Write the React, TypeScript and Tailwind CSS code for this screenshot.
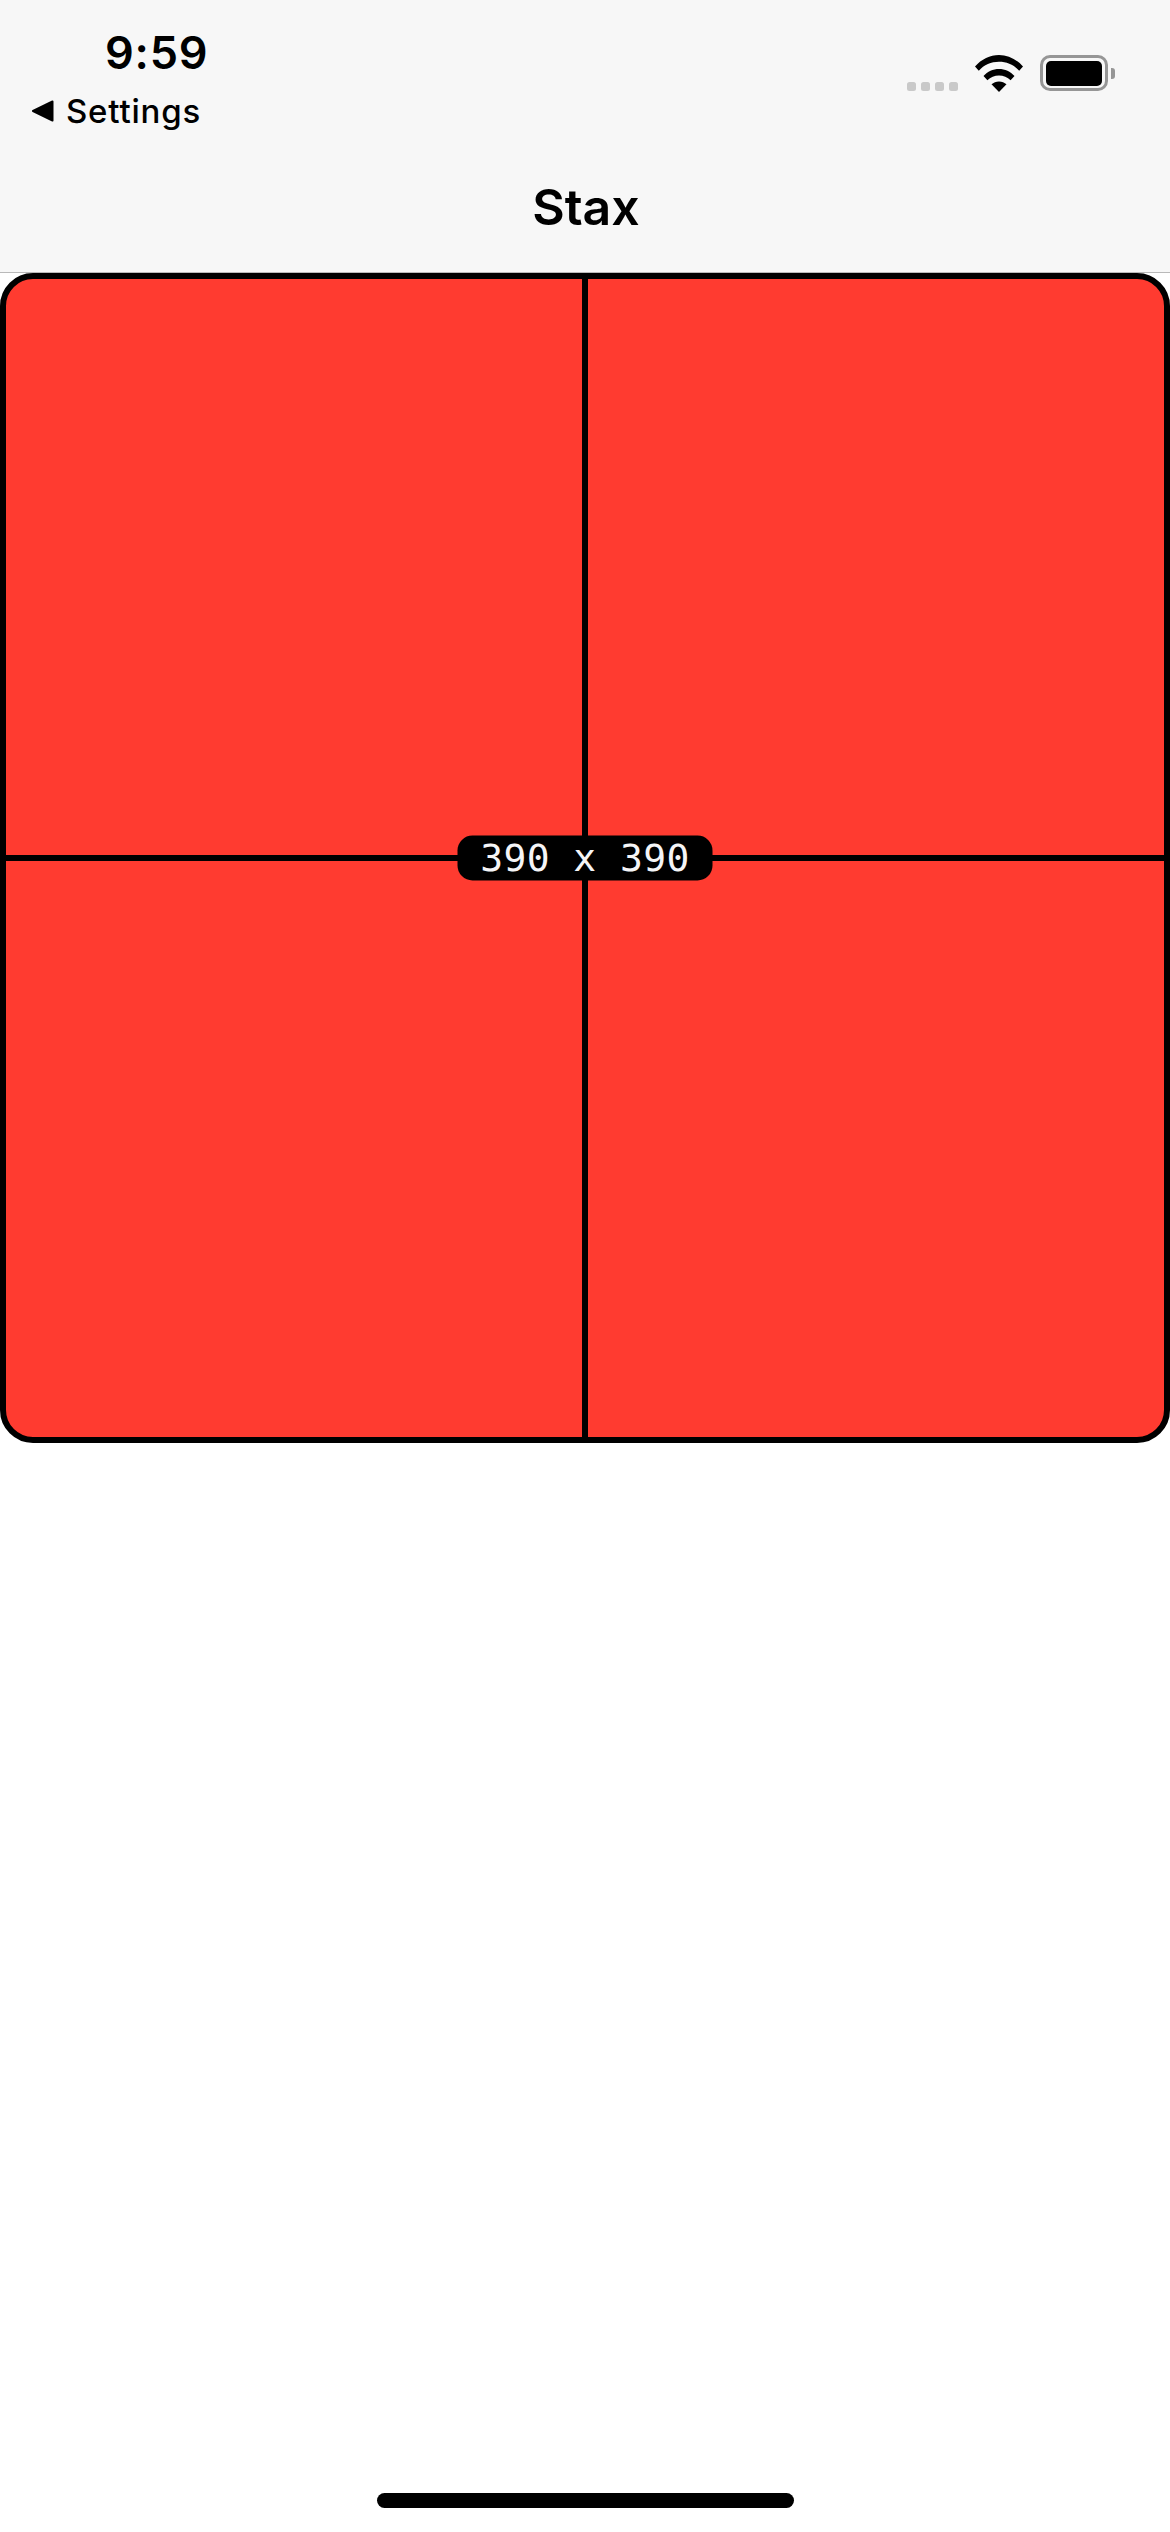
const sans = "font-['Inter','Noto_Sans',sans-serif]";

function StatusIcons() {
  return (
    <div className="flex items-start pt-[55px] pr-[55px]">
      {/* no-signal dots */}
      <div className="mt-[27px] flex gap-[5px]">
        {[0, 1, 2, 3].map((i) => (
          <div key={i} className="h-[9px] w-[9px] rounded-[2.5px] bg-[#c9c9c9]" />
        ))}
      </div>

      <svg className="ml-[17px]" width="48" height="37" viewBox="0 0 48 37">
        <path d="M0 11.500C6.500 4.200 15 0 24 0s17.500 4.200 24 11.500l-3.800 4.300C39 9.800 31.800 6.800 24 6.800S9 9.800 3.800 15.800Z" fill="#000" />
        <path d="M8.500 21C12.600 16.500 18 14 24 14s11.400 2.500 15.500 7l-3.900 4.300C32.500 22 28.400 20.400 24 20.400s-8.500 1.600-11.600 4.900Z" fill="#000" />
        <path d="M16.500 29.300C18.500 27.400 21.100 26.400 24 26.400s5.500 1 7.500 2.900L24 37Z" fill="#000" />
      </svg>

      <div className="ml-[17px] flex items-center">
        <div className="flex h-[36px] w-[68px] items-center justify-center rounded-[10px] border-[3px] border-[#969696]">
          <div className="h-[25px] w-[56px] rounded-[5px] bg-black" />
        </div>
        <div className="ml-[3px] h-[11px] w-[4px] rounded-r-[3px] bg-[#969696]" />
      </div>
    </div>
  );
}

function NavHeader() {
  return (
    <header className={`flex h-[273px] flex-col border-b border-[#b9b9b9] bg-[#f7f7f7] text-black ${sans}`}>
      <div className="flex justify-between">
        <div className="flex flex-col">
          <div className="mt-[26px] ml-[105px] text-[45px] leading-[54px] font-semibold tracking-[0.8px]">9:59</div>
          <div className="mt-[11px] ml-[32px] flex items-center">
            <svg width="22" height="22" viewBox="0 0 22 22">
              <path d="M20.500 1.500L1 11l19.500 9.500Z" fill="#000" stroke="#000" strokeWidth="2" strokeLinejoin="round" />
            </svg>
            <span className="ml-[12px] text-[33px] leading-[40px] font-[450] tracking-[0.8px]">Settings</span>
          </div>
        </div>
        <StatusIcons />
      </div>
      <div className="mt-[45px] pl-[2px] text-center text-[50px] leading-[62px] font-semibold">Stax</div>
    </header>
  );
}

function Box() {
  return (
    <div className="relative h-[1170px] rounded-[33px] border-[6px] border-black bg-[#ff3b30]">
      {/* crosshair */}
      <div className="absolute top-0 bottom-0 left-1/2 w-[6px] -translate-x-1/2 bg-black" />
      <div className="absolute top-1/2 right-0 left-0 h-[6px] -translate-y-1/2 bg-black" />
      <div className="absolute top-1/2 left-1/2 flex h-[45px] w-[255px] -translate-x-1/2 -translate-y-1/2 items-center justify-center rounded-[15px] bg-black font-['DejaVu_Sans_Mono',monospace] text-[38px] tracking-[0.4px] text-[#f5f5f7]">
        390 x 390
      </div>
    </div>
  );
}

export default function App() {
  return (
    <div className="flex h-[2532px] w-[1170px] flex-col overflow-hidden bg-white">
      <NavHeader />
      <Box />
      <div className="mt-auto mb-[24px] h-[15px] w-[417px] self-center rounded-full bg-black" />
    </div>
  );
}
